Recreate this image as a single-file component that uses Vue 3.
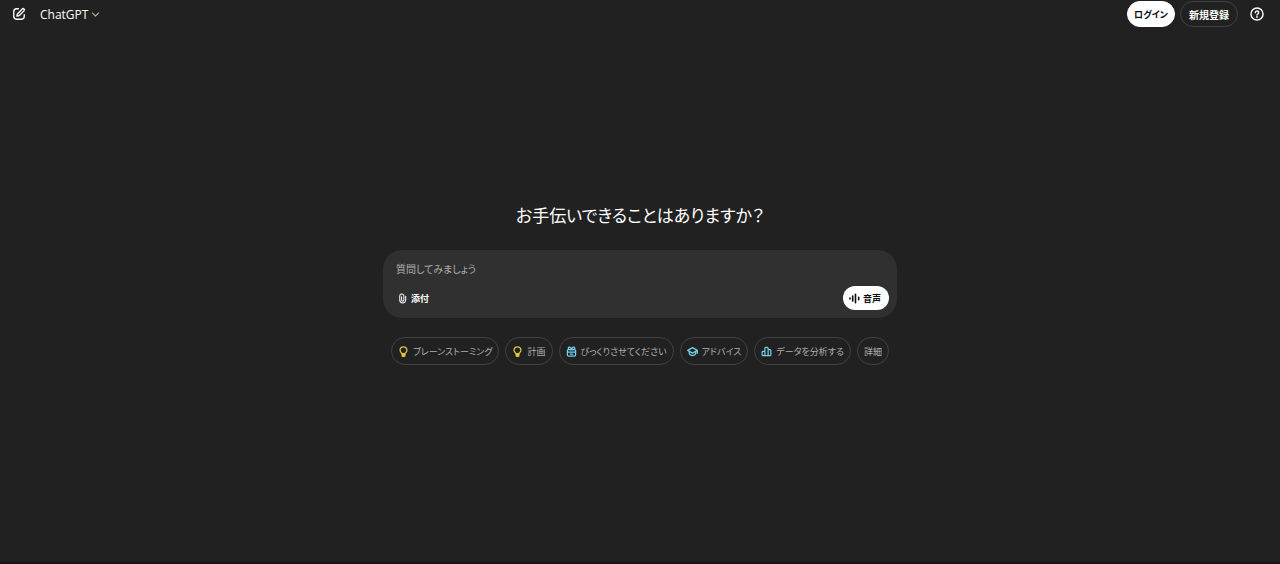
<script setup>
import { ref } from 'vue'

const question = ref('')
const chips = [
  { label: 'ブレーンストーミング', icon: 'bulb' },
  { label: '計画', icon: 'bulb' },
  { label: 'びっくりさせてください', icon: 'gift' },
  { label: 'アドバイス', icon: 'cap' },
  { label: 'データを分析する', icon: 'chart' },
  { label: '詳細', icon: null },
]
</script>

<template>
  <div class="page">
    <header class="topbar">
      <button class="icon-button" type="button" aria-label="新しいチャット">
        <svg class="edit-icon" viewBox="0 0 24 24" fill="none" stroke="currentColor" stroke-width="2.3" stroke-linecap="round" stroke-linejoin="round">
          <path d="M11 3H8a5 5 0 0 0-5 5v8a5 5 0 0 0 5 5h8a5 5 0 0 0 5-5v-3" />
          <path d="M17.6 3.4a2.1 2.1 0 0 1 3 3L13 14c-1 1-2.4 1.5-4.6 1.6C8.500 13.400 9 12 10 11z" />
        </svg>
      </button>
      <button class="model" type="button">
        ChatGPT
        <svg class="chevron" viewBox="0 0 10 10" fill="none" stroke="currentColor" stroke-width="1.2" stroke-linecap="round" stroke-linejoin="round"><path d="M1.500 3.300 5 6.800l3.500-3.500" /></svg>
      </button>
      <div class="actions">
        <button class="auth login" type="button">ログイン</button>
        <button class="auth signup" type="button">新規登録</button>
        <button class="icon-button help" type="button" aria-label="ヘルプ">
          <svg class="help-icon" viewBox="0 0 24 24" fill="none" stroke="currentColor" stroke-width="2.4" stroke-linecap="round">
            <circle cx="12" cy="12" r="10.400" />
            <path d="M9.200 9.700a2.800 2.800 0 1 1 4.400 2.300c-1 .7-1.600 1.100-1.600 1.800" />
            <circle cx="12" cy="17" r=".5" fill="currentColor" />
          </svg>
        </button>
      </div>
    </header>

    <main class="main">
      <h1 class="title">お手伝いできることはありますか？</h1>
      <form class="composer" @submit.prevent>
        <input v-model="question" class="prompt" type="text" placeholder="質問してみましょう" aria-label="質問してみましょう" />
        <div class="tools">
          <button class="attach" type="button">
            <svg class="clip" viewBox="0 0 24 24" fill="none" stroke="currentColor" stroke-width="2.200" stroke-linecap="round">
              <path d="M10 8v7.500a2.500 2.500 0 0 0 5 0V7a4.500 4.500 0 0 0-9-.5V15.500a6.500 6.500 0 0 0 13 0V7" />
            </svg>
            添付
          </button>
          <button class="voice" type="button">
            <svg class="wave" viewBox="0 0 11 11" fill="none" stroke="currentColor" stroke-width="1.600" stroke-linecap="round">
              <path d="M1 5v1M3.700 3v5M6.500 1.200v8.600M9.700 4.200v2.600" />
            </svg>
            音声
          </button>
        </div>
      </form>
      <div class="chips">
        <button v-for="chip in chips" :key="chip.label" class="chip" type="button">
          <svg v-if="chip.icon" class="chip-icon" :class="chip.icon" viewBox="0 0 24 24" fill="none" stroke="currentColor" stroke-width="2.700" stroke-linecap="round" stroke-linejoin="round">
            <template v-if="chip.icon === 'bulb'">
              <path d="M8.800 17c0-2-4.300-3.300-4.300-7.800a7.500 7.500 0 0 1 15 0c0 4.500-4.300 5.800-4.300 7.800z" />
              <path d="M9 17v3.500a2 2 0 0 0 2 2h2a2 2 0 0 0 2-2V17z" fill="currentColor" />
            </template>
            <template v-else-if="chip.icon === 'gift'">
              <path d="M3 10a2 2 0 0 1 2-2h14a2 2 0 0 1 2 2v9a3 3 0 0 1-3 3H6a3 3 0 0 1-3-3zM3 13.500h18M9.500 17.500h5" />
              <path d="M12 8C10 8 5 8 5 4.800 5 1 11 1 12 8c1-7 7-7 7-3.200C19 8 14 8 12 8z" />
            </template>
            <template v-else-if="chip.icon === 'cap'">
              <path d="M1.500 9.500 12 3.500l10.500 6L12 15.500z" />
              <path d="M5 12v5c4 5 10 5 14 0v-5M22.500 10v6" />
            </template>
            <template v-else>
              <path d="M2.500 13.500a2 2 0 0 1 2-2H8.500V21h-4a2 2 0 0 1-2-2zM8.500 5a2 2 0 0 1 2-2h3a2 2 0 0 1 2 2v16h-7zM15.500 8h4a2 2 0 0 1 2 2v9a2 2 0 0 1-2 2h-4z" />
            </template>
          </svg>
          {{ chip.label }}
        </button>
      </div>
    </main>
  </div>
</template>

<style>
body {
  background: #212121;
}
</style>

<style scoped>
.page {
  box-sizing: border-box;
  min-height: 100vh;
  display: flex;
  flex-direction: column;
  border-bottom: 2px solid #1c1419;
  background: #212121;
  color: #fff;
  font-family: "Noto Sans CJK JP", sans-serif;
  font-feature-settings: "palt";
}

button,
input {
  margin: 0;
  padding: 0;
  border: 0;
  background: none;
  color: inherit;
  font: inherit;
  font-feature-settings: inherit;
}

button {
  display: flex;
  align-items: center;
  white-space: nowrap;
  cursor: pointer;
}

svg {
  flex: none;
}

.topbar {
  display: flex;
  align-items: center;
  height: 28px;
  padding: 0 16px 0 12px;
}

.edit-icon,
.help-icon {
  display: block;
  width: 14px;
  height: 14px;
}

.model {
  gap: 3px;
  margin-left: 14px;
  font-family: "Open Sans", sans-serif;
  font-size: 12px;
}

.chevron {
  width: 9px;
  height: 9px;
  color: #b4b4b4;
}

.actions {
  display: flex;
  align-items: center;
  gap: 5px;
  margin-left: auto;
}

.auth {
  height: 26px;
  border: 1px solid #424242;
  border-radius: 13px;
  font-weight: 700;
}

.login {
  padding: 0 6px;
  border-color: #fff;
  background: #fff;
  color: #0d0d0d;
  font-size: 9px;
}

.signup {
  padding: 0 8px;
  font-size: 10px;
}

.help {
  margin-left: 7px;
}

.main {
  flex: 1;
  display: flex;
  flex-direction: column;
  align-items: center;
  justify-content: center;
  padding: 0 16px 24px;
}

.title {
  margin: 0 0 21px;
  font-size: 17px;
  font-weight: 400;
  line-height: 28px;
}

.composer {
  box-sizing: border-box;
  width: 100%;
  max-width: 514px;
  padding: 8px;
  border-radius: 19px;
  background: #303030;
}

.prompt {
  display: block;
  box-sizing: border-box;
  width: 100%;
  height: 20px;
  padding: 0 5px;
  outline: 0;
  font-size: 10px;
}

.prompt::placeholder {
  color: #afafaf;
  opacity: 1;
}

.tools {
  display: flex;
  align-items: center;
  justify-content: space-between;
  margin-top: 8px;
}

.attach,
.voice {
  height: 24px;
  gap: 3px;
  font-size: 9px;
  font-weight: 700;
}

.attach {
  padding: 0 6px;
}

.clip,
.wave {
  width: 11px;
  height: 11px;
}

.voice {
  padding: 0 8px 0 6px;
  border-radius: 12px;
  background: #fff;
  color: #0d0d0d;
}

.chips {
  display: flex;
  flex-wrap: wrap;
  justify-content: center;
  gap: 6px;
  margin-top: 19px;
}

.chip {
  height: 28px;
  gap: 4px;
  padding: 0 6px;
  border: 1px solid #424242;
  border-radius: 14px;
  color: #afafaf;
  font-size: 9px;
}

.chip-icon {
  width: 11px;
  height: 11px;
  color: #76d0eb;
}

.bulb {
  color: #e2c541;
}
</style>
